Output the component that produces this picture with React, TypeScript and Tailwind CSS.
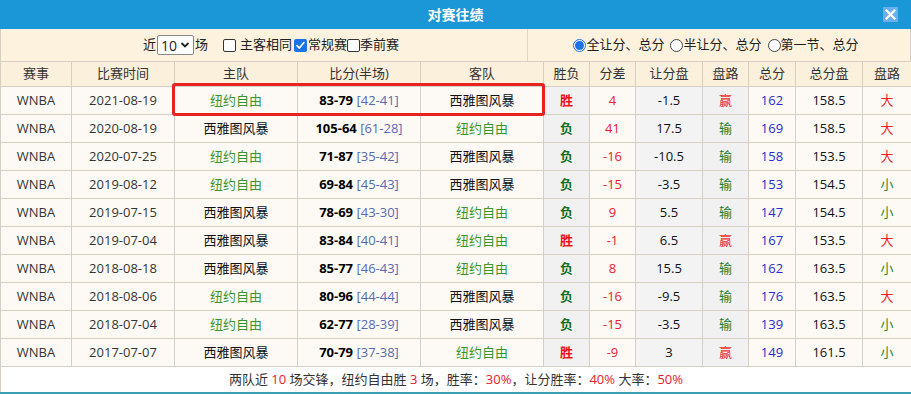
import React from "react";

type Row = {
  date: string;
  home: string;
  s1: number;
  s2: number;
  half: string;
  away: string;
  wl: string;
  diff: string;
  hcap: string;
  road: string;
  total: number;
  tline: string;
  ou: string;
};

const rows: Row[] = [
  { date: "2021-08-19", home: "纽约自由", s1: 83, s2: 79, half: "[42-41]", away: "西雅图风暴", wl: "胜", diff: "4", hcap: "-1.5", road: "赢", total: 162, tline: "158.5", ou: "大" },
  { date: "2020-08-19", home: "西雅图风暴", s1: 105, s2: 64, half: "[61-28]", away: "纽约自由", wl: "负", diff: "41", hcap: "17.5", road: "输", total: 169, tline: "158.5", ou: "大" },
  { date: "2020-07-25", home: "纽约自由", s1: 71, s2: 87, half: "[35-42]", away: "西雅图风暴", wl: "负", diff: "-16", hcap: "-10.5", road: "输", total: 158, tline: "153.5", ou: "大" },
  { date: "2019-08-12", home: "纽约自由", s1: 69, s2: 84, half: "[45-43]", away: "西雅图风暴", wl: "负", diff: "-15", hcap: "-3.5", road: "输", total: 153, tline: "154.5", ou: "小" },
  { date: "2019-07-15", home: "西雅图风暴", s1: 78, s2: 69, half: "[43-30]", away: "纽约自由", wl: "负", diff: "9", hcap: "5.5", road: "输", total: 147, tline: "154.5", ou: "小" },
  { date: "2019-07-04", home: "西雅图风暴", s1: 83, s2: 84, half: "[40-41]", away: "纽约自由", wl: "胜", diff: "-1", hcap: "6.5", road: "赢", total: 167, tline: "153.5", ou: "大" },
  { date: "2018-08-18", home: "西雅图风暴", s1: 85, s2: 77, half: "[46-43]", away: "纽约自由", wl: "负", diff: "8", hcap: "15.5", road: "输", total: 162, tline: "163.5", ou: "小" },
  { date: "2018-08-06", home: "纽约自由", s1: 80, s2: 96, half: "[44-44]", away: "西雅图风暴", wl: "负", diff: "-16", hcap: "-9.5", road: "输", total: 176, tline: "163.5", ou: "大" },
  { date: "2018-07-04", home: "纽约自由", s1: 62, s2: 77, half: "[28-39]", away: "西雅图风暴", wl: "负", diff: "-15", hcap: "-3.5", road: "输", total: 139, tline: "163.5", ou: "小" },
  { date: "2017-07-07", home: "西雅图风暴", s1: 70, s2: 79, half: "[37-38]", away: "纽约自由", wl: "胜", diff: "-9", hcap: "3", road: "赢", total: 149, tline: "161.5", ou: "小" },
];

const widths = [71, 103, 123, 123, 123, 46, 46, 67, 46, 47, 67, 49];
const headers = ["赛事", "比赛时间", "主队", "比分(半场)", "客队", "胜负", "分差", "让分盘", "盘路", "总分", "总分盘", "盘路"];

function Team({ name }: { name: string }) {
  return <span className={name === "纽约自由" ? "text-[#3a962c]" : "text-[#111]"}>{name}</span>;
}

function CheckBox({ checked }: { checked?: boolean }) {
  return checked ? (
    <span className="inline-flex h-[13px] w-[13px] items-center justify-center rounded-[2px] bg-[#1a73e8]">
      <svg width="11" height="11" viewBox="0 0 12 12">
        <path d="M2.2 6.2 L4.8 8.8 L9.8 2.8" stroke="white" strokeWidth="1.8" fill="none" strokeLinecap="round" strokeLinejoin="round" />
      </svg>
    </span>
  ) : (
    <span className="inline-block h-[13px] w-[13px] rounded-[2px] border border-[#333] bg-white" />
  );
}

function Radio({ checked }: { checked?: boolean }) {
  return checked ? (
    <span className="inline-flex h-[13px] w-[13px] items-center justify-center rounded-full border border-[#1a73e8] bg-white">
      <span className="h-[9px] w-[9px] rounded-full bg-[#1a73e8]" />
    </span>
  ) : (
    <span className="inline-block h-[13px] w-[13px] rounded-full border border-[#444] bg-white" />
  );
}

export default function App() {
  const cell = "border border-[#d6cfc4] text-center align-middle p-0";
  return (
    <div
      className="relative w-[911px] h-[394px] overflow-hidden border-b-2 border-[#3a9fb3] bg-white text-[13px] text-[#222]"
      style={{ fontFamily: "'Open Sans','Noto Sans CJK SC',sans-serif" }}
    >
      {/* title bar */}
      <div className="relative flex h-[29px] items-center justify-center bg-[#1b96d6]">
        <span className="text-[14px] font-bold text-white">对赛往绩</span>
        <div className="absolute right-[13px] top-[7px] flex h-[15px] w-[15px] items-center justify-center bg-[#6aaeee]">
          <svg width="11" height="11" viewBox="0 0 11 11">
            <path d="M1.5 1.5 L9.5 9.5 M9.5 1.5 L1.5 9.5" stroke="white" strokeWidth="2.2" strokeLinecap="square" />
          </svg>
        </div>
      </div>

      {/* filter row */}
      <div className="flex h-[32px] border-x border-[#d6cfc4] bg-[#fdf2de]">
        <div className="flex w-[527px] items-center justify-center border-r border-[#e3d6c0] pl-[14px]">
          <span>近</span>
          <span className="mx-[1px] flex h-[20px] w-[37px] items-center justify-between rounded-[2px] border border-[#888] bg-white pl-[3px] pr-[3px] text-[14px]">
            10
            <svg width="10" height="8" viewBox="0 0 10 8">
              <path d="M1.5 2 L5 5.5 L8.5 2" stroke="#222" strokeWidth="1.8" fill="none" />
            </svg>
          </span>
          <span>场</span>
          <span className="ml-[15px] mr-[4px] flex"><CheckBox /></span>
          <span>主客相同</span>
          <span className="ml-[2px] mr-[1px] flex"><CheckBox checked /></span>
          <span>常规赛</span>
          <span className="flex"><CheckBox /></span>
          <span>季前赛</span>
        </div>
        <div className="flex flex-1 items-center justify-center pl-[4px] pr-[10px]">
          <span className="flex"><Radio checked /></span>
          <span>全让分、总分</span>
          <span className="ml-[6px] flex"><Radio /></span>
          <span>半让分、总分</span>
          <span className="ml-[6px] flex"><Radio /></span>
          <span>第一节、总分</span>
        </div>
      </div>

      {/* table */}
      <table className="w-[911px] table-fixed border-collapse">
        <colgroup>
          {widths.map((w, i) => (
            <col key={i} style={{ width: w }} />
          ))}
        </colgroup>
        <thead>
          <tr className="h-[25px] bg-[#fbf0dc]">
            {headers.map((h, i) => (
              <th key={i} className={`${cell} font-normal text-[#333]`}>
                {h}
              </th>
            ))}
          </tr>
        </thead>
        <tbody>
          {rows.map((r, i) => (
            <tr key={i} className="h-[28px] bg-[#fdfaf6]">
              <td className={`${cell} text-[#333]`}>WNBA</td>
              <td className={`${cell} text-[#333]`}>{r.date}</td>
              <td className={cell}><Team name={r.home} /></td>
              <td className={cell}>
                <span className="font-bold text-black">{r.s1}</span>
                <span className="font-bold text-black">-</span>
                <span className="font-bold text-black">{r.s2}</span>{" "}
                <span className="text-[#5569b3]">{r.half}</span>
              </td>
              <td className={cell}><Team name={r.away} /></td>
              <td className={`${cell} bg-[#f1f1f1] font-bold ${r.wl === "胜" ? "text-[#ee1111]" : "text-[#11701a]"}`}>{r.wl}</td>
              <td className={`${cell} text-[#e8202a]`}>{r.diff}</td>
              <td className={`${cell} bg-[#f3f3f3] text-[#111]`}>{r.hcap}</td>
              <td className={`${cell} bg-[#f1f1f1] ${r.road === "赢" ? "text-[#ee3333]" : "text-[#27802a]"}`}>{r.road}</td>
              <td className={`${cell} text-[#2b2bcc]`}>{r.total}</td>
              <td className={`${cell} text-[#111]`}>{r.tline}</td>
              <td className={`${cell} ${r.ou === "大" ? "text-[#ee2222]" : "text-[#2a8a2a]"}`}>{r.ou}</td>
            </tr>
          ))}
          <tr className="h-[26px] bg-white">
            <td colSpan={12} className={`${cell} text-[#333]`}>
              两队近 <span className="text-[#e8202a]">10</span> 场交锋，纽约自由胜 <span className="text-[#e8202a]">3</span> 场，胜率：<span className="text-[#e8202a]">30%</span>，让分胜率：<span className="text-[#e8202a]">40%</span> 大率：<span className="text-[#e8202a]">50%</span>
            </td>
          </tr>
        </tbody>
      </table>

      {/* highlight */}
      <div className="pointer-events-none absolute left-[172px] top-[83px] h-[33px] w-[373px] rounded-[3px] border-[3px] border-[#e8231f]" />
    </div>
  );
}
